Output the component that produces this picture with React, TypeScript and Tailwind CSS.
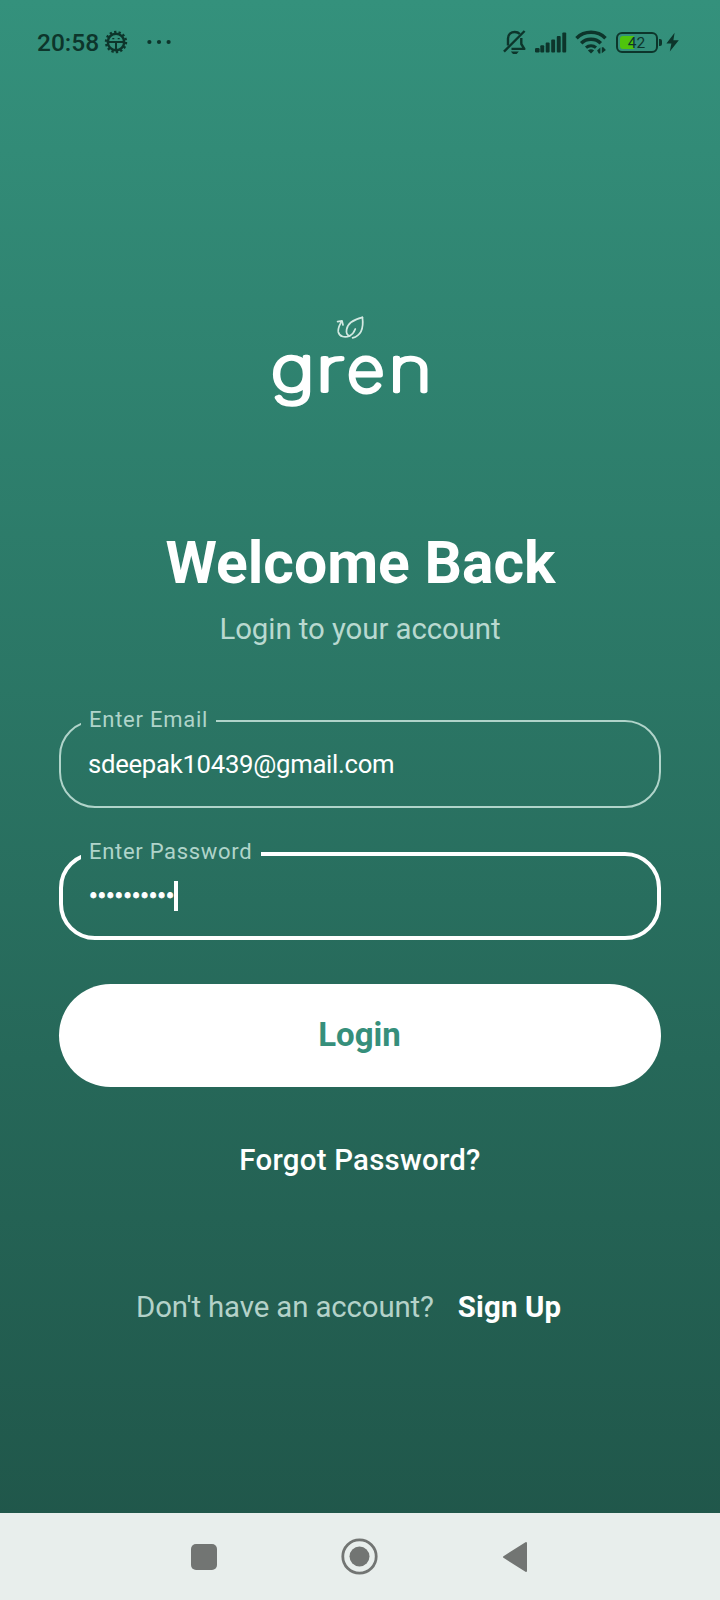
import React from "react";

const INK = "#0d352b";

function GearIcon() {
  return (
    <svg width="24" height="24" viewBox="0 0 24 24" fill="none" stroke={INK}>
      <circle cx="12" cy="12" r="8.2" strokeWidth="2.4" />
      <circle cx="12" cy="12" r="10" strokeWidth="2.4" strokeDasharray="2.3 2.188" />
      <path d="M4 12h16M12 12v8" strokeWidth="2" />
      <path d="M8.3 8.6h2M13.7 8.6h2" strokeWidth="1.3" />
    </svg>
  );
}

function MutedBell() {
  return (
    <svg width="24" height="26" viewBox="0 0 24 26" fill="none" stroke={INK} strokeWidth="2.4">
      <path d="M5 16.5V9.5C5 5.3 8 3 11.8 3c2 0 3.8.7 5 2M18.3 9V15l3 4.9H8.5" strokeLinejoin="round" />
      <path d="M1 22.6L21.6 2" />
      <path d="M7.8 22.4h8l-2.2 2.6h-3.6z" fill={INK} stroke="none" />
    </svg>
  );
}

function SignalBars() {
  return (
    <svg width="32" height="21" viewBox="0 0 32 21" fill={INK}>
      <rect x="0" y="16" width="4.6" height="4.5" rx="1.2" />
      <rect x="5.3" y="13.3" width="3.9" height="7.2" rx="1" />
      <rect x="10.7" y="10.5" width="3.9" height="10" rx="1" />
      <rect x="16.2" y="7.5" width="3.9" height="13" rx="1" />
      <rect x="21.8" y="4" width="3.9" height="16.5" rx="1" />
      <rect x="27.3" y="0.5" width="3.9" height="20" rx="1" />
    </svg>
  );
}

function WifiIcon() {
  return (
    <svg width="32" height="24" viewBox="0 0 32 24" fill="none" stroke={INK} strokeWidth="3.5">
      <path d="M1.5 8.2C9.5.4 22.5.4 30.5 8.2" />
      <path d="M6.2 13.2c5.4-5.2 14.2-5.2 19.6 0" />
      <path d="M11 17.6c2.8-2.6 7.2-2.6 10 0" strokeWidth="3" />
      <path d="M12.9 20.4c1.8-1.6 4.4-1.6 6.2 0L16 23.6z" fill={INK} stroke="none" />
      <path d="M25.4 17.4v6h-1.6l-1.7-3zM26.8 23.2v-6h1.5l2.6 2.8z" fill={INK} stroke="none" />
    </svg>
  );
}

function StatusBar() {
  return (
    <header className="flex h-[84px] items-center pl-[37px] pr-[41px]">
      <span className="mt-px text-[24.5px] font-medium leading-[30px] text-[#0d352b]">20:58</span>
      <span className="ml-[5px]">
        <GearIcon />
      </span>
      <svg className="ml-[18px]" width="26" height="6" viewBox="0 0 26 6" fill={INK}>
        <circle cx="3.4" cy="3" r="2.1" />
        <circle cx="13" cy="3" r="2.1" />
        <circle cx="22.6" cy="3" r="2.1" />
      </svg>
      <span className="ml-auto">
        <MutedBell />
      </span>
      <span className="ml-[8px] pt-px">
        <SignalBars />
      </span>
      <span className="ml-[8px]">
        <WifiIcon />
      </span>
      <div className="relative ml-[9px] h-[21px] w-[42px] overflow-hidden rounded-[6px] border-2 border-[#0d352b]">
        <div className="ml-[2px] mt-[2px] h-[13px] w-[14px] rounded-l-[3px] bg-[#4fc40c]" />
        <span className="absolute inset-0 pr-[1px] text-center text-[15.5px] leading-[18px] text-[#0d352b]">42</span>
      </div>
      <div className="ml-[1px] h-[7px] w-[3px] rounded-r-[2px] bg-[#0d352b]" />
      <svg className="ml-[4px]" width="13" height="20" viewBox="0 0 13 20" fill={INK}>
        <path d="M8.6 0.8L0.4 11.6H5.4L3.8 19.4L12.8 8.2H7.4z" />
      </svg>
    </header>
  );
}

function Logo() {
  return (
    <svg
      className="mx-auto block"
      width="180"
      height="115"
      viewBox="0 0 180 115"
      role="img"
      aria-label="gren"
    >
      <g fill="none" stroke="#d3e9e2" strokeWidth="1.7" strokeLinecap="round" strokeLinejoin="round">
        <path d="M102.4 12.4C94.5 14.4 87.5 18.5 86.6 24.5C86 28 87.2 30.7 89.6 30.9C92.3 29.5 94.3 26.8 95.3 24" />
        <path d="M102.4 12.4C103.6 21.5 102 30.5 92.6 32.9" />
        <path d="M89.6 30.9C85 33 79.4 31.8 78.3 27C77.6 23 79.8 19.8 81.4 16.6" />
        <path d="M77.6 16.6L82 15.8L83 20" />
      </g>
      <g fill="#fff" stroke="#fff" strokeLinejoin="round" fontFamily="Inter, sans-serif" fontWeight="100" fontSize="59.5">
        <text transform="translate(11.1 86) scale(1.26 1.04)" strokeWidth="4.5">g</text>
        <text transform="translate(55 85.5) scale(1.5 1)" strokeWidth="3.9">r</text>
        <text transform="translate(87.2 85.5) scale(1.083 1)" strokeWidth="4.8">e</text>
        <text transform="translate(128.4 85.5) scale(1.25 1)" strokeWidth="4.3">n</text>
      </g>
    </svg>
  );
}

export default function App() {
  return (
    <div className="flex h-[1600px] w-[720px] flex-col bg-linear-to-b from-[#34917c] to-[#1f5448] font-['Roboto',sans-serif]">
      <StatusBar />
      <main className="flex flex-1 flex-col px-[59px] pt-[221px]">
        <div className="-ml-[20px]">
          <Logo />
        </div>
        <h1 className="mt-[108px] pl-[1px] text-center text-[58.8px] font-bold leading-[70px] text-white">
          Welcome Back
        </h1>
        <p className="mt-[13px] text-center text-[29.4px] leading-[36px] tracking-[-0.07px] text-[#b9d9d0]">
          Login to your account
        </p>

        <fieldset className="mt-[60px] h-[101px] min-w-0 rounded-[36px] border-2 border-[#b0d4ca]">
          <legend className="ml-[20px] px-[8px] pb-[2px] text-[22px] leading-[26px] tracking-[0.75px] text-[#b0d4ca]">
            Enter Email
          </legend>
          <div className="pl-[27px] pt-[13px] text-[25.7px] leading-[32px] tracking-[-0.28px] text-white">
            sdeepak10439@gmail.com
          </div>
        </fieldset>

        <fieldset className="mt-[31px] h-[101px] min-w-0 rounded-[36px] border-4 border-white">
          <legend className="ml-[18px] pl-[8px] pr-[9px] pb-[3px] text-[22px] leading-[26px] tracking-[0.7px] text-[#b0d4ca]">
            Enter Password
          </legend>
          <div className="flex items-center pl-[26px] pt-[12px] text-[25.7px] leading-[32px] text-white">
            <span className="tracking-[-0.13px] [-webkit-text-stroke:0.8px_white]">••••••••••</span>
            <span className="h-[30px] w-[4px] bg-white" />
          </div>
        </fieldset>

        <button className="mt-[44px] h-[103px] rounded-full bg-white pb-[2px] pr-[1px] text-[33px] font-bold text-[#368f7b]">
          Login
        </button>
        <a className="mt-[55px] text-center text-[29.4px] font-medium leading-[36px] tracking-[0.25px] text-white">
          Forgot Password?
        </a>
        <div className="mt-[111px] flex pl-[77px] text-[29.4px] leading-[36px]">
          <span className="tracking-[-0.13px] text-[#b4d2c9]">Don't have an account?</span>
          <a className="ml-[24px] font-bold tracking-[0.15px] text-white">Sign Up</a>
        </div>
      </main>
      <nav className="flex h-[87px] items-center bg-[#e8eeec] pl-[191px]">
        <div className="h-[26px] w-[26px] rounded-[5px] bg-[#727573]" />
        <svg className="ml-[124px]" width="37" height="37" viewBox="0 0 37 37">
          <circle cx="18.5" cy="18.5" r="16.7" fill="none" stroke="#727573" strokeWidth="2.8" />
          <circle cx="18.5" cy="18.5" r="10" fill="#727573" />
        </svg>
        <svg className="ml-[124px]" width="26" height="32" viewBox="0 0 26 32">
          <path d="M2 16L24 2V30z" fill="#727573" stroke="#727573" strokeWidth="2" strokeLinejoin="round" />
        </svg>
      </nav>
    </div>
  );
}
